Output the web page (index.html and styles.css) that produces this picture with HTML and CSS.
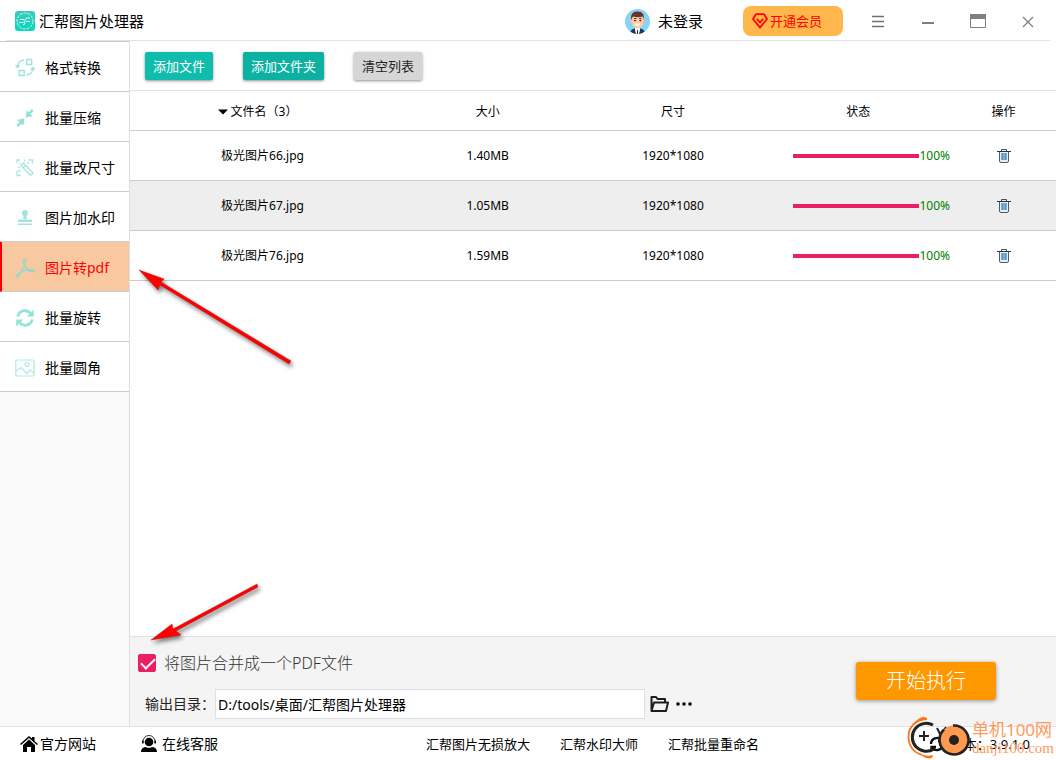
FILE: index.html
```html
<!DOCTYPE html>
<html lang="zh-CN">
<head>
<meta charset="utf-8">
<title>汇帮图片处理器</title>
<link rel="stylesheet" href="styles.css">
</head>
<body>
<svg class="defs" aria-hidden="true">
  <symbol id="trash" viewBox="0 0 16 16">
    <path d="M5.500 3V1.500h5V3" fill="none" stroke="#444b55"/>
    <path d="M3.500 4h9v10h-9z" fill="#e4f1f3"/>
    <path d="M5 5h6v7H5z" fill="#6fb2e2"/>
    <path d="M6.500 5v7M9.500 5v7" stroke="#6c8fb0" fill="none"/>
    <path d="M3.500 3.500V13q0 1.500 1.500 1.500h6q1.500 0 1.500-1.500V3.500" fill="none" stroke="#555b66"/>
    <path d="M1 3.500h14" stroke="#2d3138"/>
  </symbol>
</svg>
<header class="titlebar">
  <div class="brand">
    <svg width="20" height="20" viewBox="0 0 20 20"><defs><linearGradient id="g" x2="0" y2="1"><stop stop-color="#3cc9bd"/><stop offset="1" stop-color="#08d9bd"/></linearGradient></defs><rect width="20" height="20" rx="3" fill="url(#g)"/><circle cx="10" cy="10" r="8" fill="none" stroke="#c9f7f0" stroke-dasharray="3 1"/><path d="M4 11.500h4q2 0 2-2t2-2.500h3M8 14q2 0 2-2.500M5 8.500h4M11 10.500h4" stroke="#e6fffb" fill="none"/></svg>
    <h1 class="brand-name">汇帮图片处理器</h1>
  </div>
  <div class="account">
    <svg width="25" height="25" viewBox="0 0 25 25"><defs><clipPath id="av"><circle cx="12.500" cy="12.500" r="12.500"/></clipPath></defs><g clip-path="url(#av)"><path fill="#83d4fb" d="M0 0h25v25H0z"/><path d="M5 25q0-5 5-5.500h5q5 .5 5 5.500z" fill="#18395a"/><path d="M10 18h5v3l-1 4h-3l-1-4z" fill="#fff"/><path d="M12 21h1v4h-1z" fill="#333"/><ellipse cx="5.800" cy="12" rx="1.500" ry="2" fill="#f3b992"/><ellipse cx="19.200" cy="12" rx="1.500" ry="2" fill="#f3b992"/><path d="M6.500 7h12v6q-.5 6-6 6.500-5.500-.5-6-6.500z" fill="#fbcaa4"/><path d="M6 11Q5 2.500 12 2.500q8-.5 7 8.500l-1-3.500q-5 1.500-10 0z" fill="#6b3428"/><path d="M9 9.500h2.500M14 9.500h2.500" stroke="#71402f"/><circle cx="10" cy="11.500" r=".8"/><circle cx="15.300" cy="11.500" r=".8"/><path d="M9.500 14.500h6q-.5 2.500-3 2.500t-3-2.500" fill="#fff"/></g></svg>
    <span>未登录</span>
  </div>
  <button class="vip"><svg width="16" height="16" viewBox="0 0 16 16" fill="none" stroke="#f00" stroke-width="1.800" stroke-linejoin="round"><path d="M4 1.200h8L15 6l-7 8.600L1 6z"/><path d="M4.800 5.800 8 9.500l3.200-3.700"/></svg>开通会员</button>
  <nav class="window-buttons">
    <button aria-label="菜单"><svg width="16" height="16" viewBox="0 0 16 16"><path d="M2 3.500h12M2 8.500h12M2 13.500h12" stroke="#707070" stroke-width="1.400"/></svg></button>
    <button aria-label="最小化"><svg width="16" height="16" viewBox="0 0 16 16"><path d="M2 10h12" stroke="#808080" stroke-width="2"/></svg></button>
    <button aria-label="最大化"><svg width="16" height="16" viewBox="0 0 16 16"><path d="M.5 1.500h15v13H.5z" fill="none" stroke="#808080"/><path d="M0 1h16v5H0z" fill="#808080"/></svg></button>
    <button aria-label="关闭"><svg width="16" height="16" viewBox="0 0 16 16"><path d="m3 4 10 10M13 4 3 14" stroke="#808080" stroke-width="1.300"/></svg></button>
  </nav>
</header>
<div class="workspace">
  <nav class="sidebar">
    <a class="side-item" href="#convert"><svg width="20" height="20" viewBox="0 0 20 20" fill="none" stroke="#9be3da" stroke-width="1.300"><path d="M11.700 1.500h5v5h-5zM4.200 12.500h5v5h-5zM9 2Q3 2.500 2.500 9M.5 7l2 2.500 2-2M11.500 17q6-.5 6.500-7M15.500 12l2.500-2.500L20 12"/></svg>格式转换</a>
    <a class="side-item" href="#compress"><svg width="20" height="20" viewBox="0 0 20 20" fill="#93e3d9"><path d="M16.800 1 18.700 2.900 15.500 6l2.300 2.300-7.300 1.200 1.200-7.300L13.700 4.200zM3.200 19 1.300 17.100 4.500 14 2.200 11.700l7.300-1.200-1.200 7.300L6.300 15.800z"/></svg>批量压缩</a>
    <a class="side-item" href="#resize"><svg width="20" height="20" viewBox="0 0 20 20" fill="none" stroke="#a5e6df" stroke-width="1.300"><path d="M2 5V2h3M13.500 2h4v3.500M2 12.500v5h4M6 7.500l2.500-2.500 9.500 10-2.500 2.500zM8 10l2.500-2.500M4.500 5 5.500 6M9.500 1.500v2M3 9.500h2M12 5.500l2-1.500M5 12l-1.500 2"/></svg>批量改尺寸</a>
    <a class="side-item" href="#watermark"><svg width="20" height="20" viewBox="0 0 20 20" fill="#a2e5dd"><path d="M10 2a3 3 0 0 1 3 3q0 2-1.500 3l.3 3H8.200l.3-3Q7 7 7 5a3 3 0 0 1 3-3zM3 11.500h14V14H3zM3 15.500h14V17H3z"/></svg>图片加水印</a>
    <a class="side-item active" href="#pdf" aria-current="page"><svg width="20" height="20" viewBox="0 0 20 20" fill="none" stroke="#96d8ca" stroke-width="1.500"><path d="M10 1q-2-.5-1.500 3 1 5.500 5 8.500 3 1.500 5.500 1 .5-1.500-2-2-8 0-14 4.500-2 1.500-2 2.500 1.500 1 3-1.500Q8 11 10.500 4.500 11 1.500 10 1z"/></svg>图片转pdf</a>
    <a class="side-item" href="#rotate"><svg width="20" height="20" viewBox="0 0 20 20" fill="none" stroke="#93e3d9" stroke-width="2.800"><path d="M2.800 8.500A7.200 7.200 0 0 1 15.500 5.500M17.200 11.500A7.200 7.200 0 0 1 4.500 14.500"/><path d="M18.800 1.500V8.500h-7zM1.200 18.500V11.500h7z" fill="#93e3d9" stroke="none"/></svg>批量旋转</a>
    <a class="side-item" href="#round"><svg width="20" height="20" viewBox="0 0 20 20" fill="none" stroke="#aeeae4" stroke-width="1.200"><rect x=".8" y="2" width="18.400" height="16" rx="1.500"/><circle cx="12" cy="6.500" r="2"/><path d="M1 13l5-3.500 6 6 3-3.500 4 3.500"/></svg>批量圆角</a>
  </nav>
  <main class="content">
    <div class="toolbar">
      <button class="tool">添加文件</button>
      <button class="tool folder">添加文件夹</button>
      <button class="tool clear">清空列表</button>
    </div>
    <div class="list">
      <table class="files">
        <colgroup><col class="col-name"><col><col><col><col class="col-action"></colgroup>
        <thead><tr><th class="name-head"><svg class="sort" width="10" height="6" viewBox="0 0 10 6"><path d="M0 .5h10L5 5.500z"/></svg>文件名（3）</th><th>大小</th><th>尺寸</th><th>状态</th><th>操作</th></tr></thead>
        <tbody>
          <tr><td>极光图片66.jpg</td><td>1.40MB</td><td>1920*1080</td><td><div class="status"><span class="bar"></span>100%</div></td><td><button class="delete" aria-label="删除"><svg width="16" height="16"><use href="#trash"/></svg></button></td></tr>
          <tr><td>极光图片67.jpg</td><td>1.05MB</td><td>1920*1080</td><td><div class="status"><span class="bar"></span>100%</div></td><td><button class="delete" aria-label="删除"><svg width="16" height="16"><use href="#trash"/></svg></button></td></tr>
          <tr><td>极光图片76.jpg</td><td>1.59MB</td><td>1920*1080</td><td><div class="status"><span class="bar"></span>100%</div></td><td><button class="delete" aria-label="删除"><svg width="16" height="16"><use href="#trash"/></svg></button></td></tr>
        </tbody>
      </table>
    </div>
    <section class="output">
      <div class="options">
        <label class="merge"><input type="checkbox" checked>将图片合并成一个PDF文件</label>
        <div class="path">
          <label for="dir">输出目录：</label>
          <input id="dir" type="text" value="D:/tools/桌面/汇帮图片处理器">
          <button aria-label="打开目录"><svg width="20" height="18" viewBox="0 0 20 18" fill="none" stroke="#1c1c22" stroke-width="2" stroke-linejoin="round"><path d="M1.500 16V2H6l1.500 2H15v3M1.500 16 4 7.500h14L16 16z"/></svg></button>
          <button aria-label="更多"><svg width="18" height="6" viewBox="0 0 18 6"><circle cx="3" cy="3" r="1.800"/><circle cx="9" cy="3" r="1.800"/><circle cx="15" cy="3" r="1.800"/></svg></button>
        </div>
      </div>
      <button class="start">开始执行</button>
    </section>
  </main>
</div>
<footer class="footer">
  <div class="support">
    <a href="#site"><svg width="18" height="18" viewBox="0 0 18 18"><path d="M0 9 9 1l3 2.500V2h2.500v4L18 9l-1 1-8-7-8 7z"/><path d="m9 4.500 6 5.500v7h-4v-5H7v5H3v-7z"/></svg>官方网站</a>
    <a class="service" href="#service"><svg width="18" height="18" viewBox="0 0 18 18"><circle cx="9" cy="7" r="4.300"/><path d="M3 8V6.500a6 6 0 0 1 12 0V8" fill="none" stroke="#000" stroke-width=".8"/><path d="M2 5.500h1.500v3H2zM14.500 5.500H16v3h-1.500zM1 17q0-4 4-5l4 1 4-1q4 1 4 5z"/></svg>在线客服</a>
  </div>
  <nav class="products"><a href="#enlarge">汇帮图片无损放大</a><a href="#master">汇帮水印大师</a><a href="#rename">汇帮批量重命名</a></nav>
  <div class="version"><svg width="16" height="16" viewBox="0 0 16 16" fill="none" stroke="#111" stroke-width="2.400"><path d="M2 8a6 6 0 0 1 10.500-4M14 8a6 6 0 0 1-10.500 4M13.500 1v4H9M2.500 15v-4H7"/></svg>版本：3.9.1.0</div>
</footer>
<div class="watermark">
  <svg width="64" height="44" viewBox="0 0 64 44" fill="none"><path d="M12 5Q2 11 2.500 21q.5 14 13.500 18" stroke="#ff7418" stroke-width="1.800"/><path d="M6 10Q11 2 17 1q5 0 4 3Q13 4 6 10zM13 37q6 4 14 2l-1 3q-7 2-13-5z" fill="#ff7418"/><path d="M27 9a14 14 0 1 0 1 24" stroke="#222" stroke-width="3"/><path d="M18 15v10M13 20h10M31 12l3 6M40 11l-3 5" stroke="#222" stroke-width="2"/><circle cx="48" cy="24" r="14.500" fill="#ff9950"/><path d="M47 9.500a14.500 14.500 0 1 1-9 4" stroke="#222" stroke-width="2.600"/><circle cx="48" cy="24" r="5" fill="#222"/></svg>
  <div class="wm-text"><span class="wm-name">单机100网</span><span class="wm-url">danji100.com</span></div>
</div>
<svg class="arrow arrow-nav" width="166" height="110" viewBox="0 0 166 110"><path d="m8 9 25 9-3 3 130 79-2 3L29 24l-2 5z" fill="#f00" stroke="#a22" stroke-width=".5"/></svg>
<svg class="arrow arrow-check" width="120" height="76" viewBox="0 0 120 76"><path d="m5 68 21-16 1 5 84-45 1 3-82 44 5 4z" fill="#f00" stroke="#a22" stroke-width=".5"/></svg>
</body>
</html>
```
FILE: styles.css
```css
* { box-sizing: border-box; }
body {
  position: relative;
  display: flex;
  flex-direction: column;
  min-height: 100vh;
  margin: 0;
  overflow: hidden;
  background: #fff;
  color: #000;
  font: 14px/20px "Noto Sans", "Noto Sans CJK SC", sans-serif;
}
button, input { font: inherit; color: inherit; }
button { display: flex; align-items: center; justify-content: center; padding: 0; border: 0; background: none; cursor: pointer; }
a { color: inherit; text-decoration: none; }
svg { flex: none; display: block; }
.defs { position: absolute; width: 0; height: 0; }

.titlebar { display: flex; align-items: center; height: 41px; margin: 0 6px; padding-top: 2px; border-bottom: 1px solid #e2e2e2; }
.brand { display: flex; align-items: center; gap: 4px; flex: 1; padding-left: 9px; }
.brand-name { margin: 0; font-size: 15px; font-weight: 400; }
.account { display: flex; align-items: center; gap: 8px; margin-right: 40px; font-size: 15px; }
.vip { gap: 2px; justify-content: flex-start; width: 100px; height: 30px; margin-right: 10px; padding-left: 9px; border-radius: 8px; background: #ffb74d; color: #f00; font-size: 13px; }
.window-buttons { display: flex; margin-right: -3px; }
.window-buttons button { width: 50px; height: 30px; }

.workspace { display: flex; flex: 1; }
.sidebar { width: 130px; border-right: 1px solid #dedede; background: #f9f9f9; }
.side-item { display: flex; align-items: center; gap: 10px; height: 50px; padding: 3px 0 0 15px; background: #fff; border-bottom: 1px solid #ccc; }
.side-item:first-child { height: 51px; border-top: 1px solid #ccc; }
.side-item.active { padding-left: 13px; border-left: 2px solid #f00; background: #f8c9a0; color: #f00; }

.content { display: flex; flex: 1; flex-direction: column; min-width: 0; }
.toolbar { display: flex; align-items: center; gap: 30px; height: 50px; padding-left: 15px; border-bottom: 1px solid #e2e2e2; }
.tool { height: 28px; padding: 0 8px; border-radius: 2px; background: #10bcab; color: #fff; font-size: 13px; box-shadow: 0 1px 3px rgba(0, 0, 0, .45); }
.tool.folder { background: #0cb1a1; }
.tool.clear { background: #d6d6d6; color: #222; }
.list { flex: 1; }
.files { width: 100%; table-layout: fixed; border-collapse: separate; border-spacing: 0; font-size: 12px; }
.col-name { width: 265px; }
.col-action { width: 105px; }
.files th, .files td { height: 50px; padding: 0; border-bottom: 1px solid #ccc; text-align: center; font-weight: 400; }
.files th { height: 40px; padding-top: 2px; }
.files th.name-head { padding-right: 10px; }
.files tbody tr:nth-child(even) { background: #eee; }
.sort { display: inline-block; margin-right: 3px; vertical-align: middle; }
.status { display: flex; align-items: center; justify-content: flex-end; padding-right: 1px; color: #008000; }
.bar { width: 126px; height: 4px; background: #e91e63; }
.delete { margin: 0 auto; }

.output { display: flex; align-items: center; justify-content: space-between; height: 90px; padding: 0 60px 0 8px; border-top: 1px solid #e2e2e2; background: #f4f4f4; }
.options { display: flex; flex-direction: column; gap: 16px; padding-top: 8px; }
.merge { display: flex; align-items: center; gap: 8px; height: 20px; color: #333; font-size: 16px; font-weight: 300; }
.merge input { position: relative; width: 18px; height: 18px; margin: 0; appearance: none; border-radius: 2px; background: #fff; border: 1px solid #e91e63; }
.merge input:checked { background: #e91e63; }
.merge input:checked::after { content: ""; position: absolute; left: 5px; top: 0; width: 6px; height: 12px; border: solid #fff; border-width: 0 2px 2px 0; transform: rotate(45deg); }
.path { display: flex; align-items: center; height: 30px; padding-left: 7px; color: #222; }
.path input { width: 430px; height: 30px; padding: 0 2px; border: 1px solid #dcdfe6; background: #fff; color: #000; }
.path button { margin-left: 5px; }
.start { width: 140px; height: 38px; margin-bottom: 2px; border-radius: 3px; background: #ff9800; color: #fff; font-size: 20px; font-weight: 300; box-shadow: 0 1px 4px rgba(0, 0, 0, .4); }

.footer { display: grid; grid-template-columns: 406px auto 1fr; align-items: center; height: 34px; padding: 0 26px 0 20px; border-top: 1px solid #e2e2e2; }
.support, .support a, .products, .version { display: flex; align-items: center; }
.support { gap: 44px; }
.support a { gap: 2px; }
.support .service { gap: 4px; }
.products { gap: 30px; font-size: 13px; }
.version { justify-content: flex-end; gap: 6px; font-size: 13px; }

.watermark { position: absolute; right: 2px; bottom: 0; display: flex; align-items: center; gap: 2px; color: #ff9a5c; }
.wm-text { display: flex; flex-direction: column; }
.wm-name { font-size: 17px; line-height: 20px; }
.wm-url { font: 15px/16px "Liberation Serif", serif; }
.arrow { position: absolute; filter: drop-shadow(2px 3px 2px rgba(0, 0, 0, .5)); }
.arrow-nav { left: 131px; top: 261px; }
.arrow-check { left: 146px; top: 572px; }
```
